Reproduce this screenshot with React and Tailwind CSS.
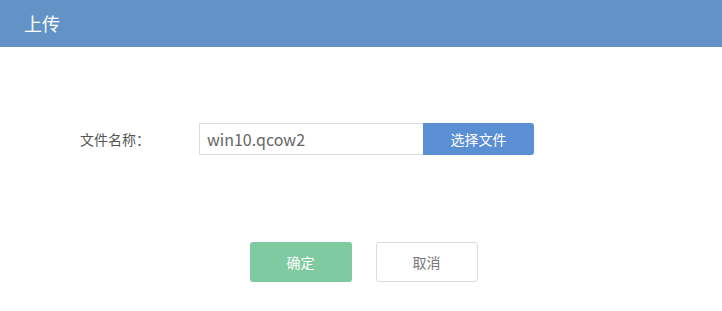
import React, { useState } from 'react';

const font = { fontFamily: '"Microsoft YaHei", "Noto Sans CJK SC", "Open Sans", sans-serif' };

const App = () => {
  const [fileName] = useState('win10.qcow2');

  return (
    <div className="w-[722px] h-[311px] bg-white" style={font}>
      {/* Header */}
      <div className="h-[47px] bg-[#6393c6] flex items-center pl-6">
        <h1 className="text-[18px] text-white font-normal">上传</h1>
      </div>

      {/* Form */}
      <div className="flex items-center pt-[76px] pl-20">
        <label className="w-[119px] text-[14px] text-[#555]">文件名称：</label>
        <div className="flex">
          <input
            className="w-[224px] h-[32px] border border-[#dcdcdc] border-r-0 px-[7px] text-[16px] text-[#666] outline-none"
            value={fileName}
            readOnly
          />
          <button className="w-[111px] h-[32px] bg-[#5b8fd3] text-white text-[14px] rounded-r-[3px]">
            选择文件
          </button>
        </div>
      </div>

      {/* Actions */}
      <div className="flex justify-center gap-6 pt-[87px] pl-[5px]">
        <button className="w-[102px] h-[40px] bg-[#7fcaa1] text-white text-[14px] rounded-[3px]">
          确定
        </button>
        <button className="w-[102px] h-[40px] bg-white border border-[#dcdcdc] text-[#777] text-[14px] rounded-[3px]">
          取消
        </button>
      </div>
    </div>
  );
};

export default App;
